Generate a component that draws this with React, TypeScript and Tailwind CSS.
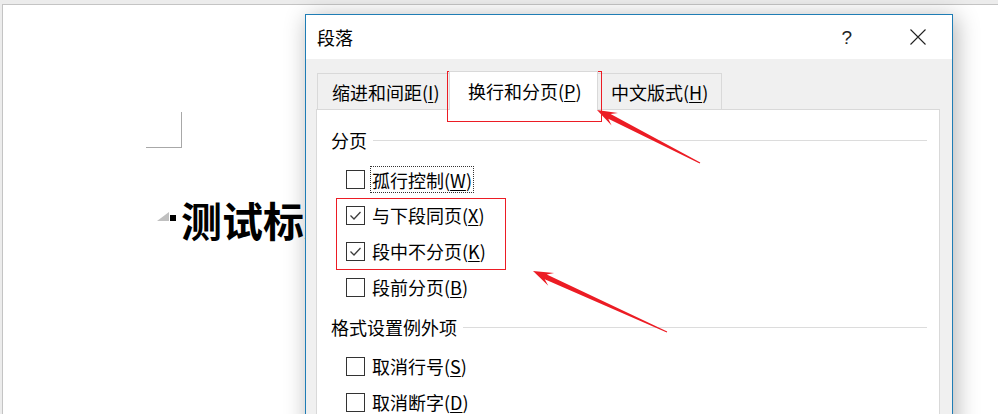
const cjk = "font-['Noto_Sans_CJK_SC',sans-serif]";

type Pt = [number, number];

// red annotation arrow: thin tail widening to a barbed head
const arrowPoints = (tail: Pt, tip: Pt) => {
  const dx = tip[0] - tail[0];
  const dy = tip[1] - tail[1];
  const len = Math.hypot(dx, dy);
  const ux = dx / len;
  const uy = dy / len;
  const nx = -uy;
  const ny = ux;
  const at = (back: number, side: number): string =>
    `${(tip[0] - ux * back + nx * side).toFixed(1)},${(tip[1] - uy * back + ny * side).toFixed(1)}`;
  const t1 = `${(tail[0] + nx * 0.6).toFixed(1)},${(tail[1] + ny * 0.6).toFixed(1)}`;
  const t2 = `${(tail[0] - nx * 0.6).toFixed(1)},${(tail[1] - ny * 0.6).toFixed(1)}`;
  return [t1, at(14, 2.6), at(20, 7), tip.join(','), at(20, -7), at(14, -2.6), t2].join(' ');
};

const Checkbox = ({ checked }: { checked?: boolean }) => (
  <div className="flex h-[19px] w-[19px] shrink-0 items-center justify-center border border-[#333] bg-white">
    {checked && (
      <svg width="17" height="17" viewBox="0 0 17 17" fill="none">
        <path d="M3.5 8.5 L7 12 L13.5 5" stroke="#3c3c3c" strokeWidth="1.3" />
      </svg>
    )}
  </div>
);

interface RowProps {
  label: string;
  hotkey: string;
  checked?: boolean;
  focused?: boolean;
}

const Row = ({ label, hotkey, checked, focused }: RowProps) => (
  <div className="flex h-[36px] items-center pl-[29px]">
    <Checkbox checked={checked} />
    {focused ? (
      <span className="ml-[5px] border border-dotted border-[#333] px-[1px] pb-[3px] pt-[4px] text-[18px] leading-[18px] text-black">
        {label}(<span className="underline underline-offset-2">{hotkey}</span>)
      </span>
    ) : (
      <span className="ml-[7px] text-[18px] leading-[18px] text-black">
        {label}(<span className="underline underline-offset-2">{hotkey}</span>)
      </span>
    )}
  </div>
);

const Section = ({ title, className = '' }: { title: string; className?: string }) => (
  <div className={`flex h-[18px] items-center pl-[14px] pr-[12px] ${className}`}>
    <span className="text-[18px] leading-[18px] text-black">{title}</span>
    <div className="ml-[6px] h-px flex-1 bg-[#dcdcdc]" />
  </div>
);

export default function App() {
  return (
    <div className={`relative h-[414px] w-[998px] overflow-hidden bg-[#ececec] ${cjk}`}>
      {/* document page */}
      <div className="ml-[2px] mt-[4px] h-[410px] border-l border-t border-[#c4c4c4] bg-white">
        <div className="ml-[143px] mt-[107px] h-[36px] w-[36px] border-b border-r border-[#a8a8a8]" />
        <div className="mt-[51px] flex h-[40px] items-start pl-[154px]">
          <svg className="mt-[13px]" width="12" height="9" viewBox="0 0 12 9">
            <polygon points="0,9 12,0 12,9" fill="#c0c0c0" />
          </svg>
          <div className="ml-[1px] mt-[16px] h-[6px] w-[6px] bg-black" />
          <span className="ml-[5px] whitespace-nowrap text-[41px] font-bold leading-[41px] text-black">
            测试标题
          </span>
        </div>
      </div>

      {/* paragraph dialog */}
      <div className="absolute left-[305px] top-[14px] flex h-[420px] w-[648px] flex-col border border-[#1f7db5] bg-[#f0f0f0] shadow-[3px_3px_22px_rgba(0,0,0,0.3)]">
        <div className="flex h-[44px] items-center bg-white pl-[11px] pr-[26px]">
          <span className="text-[18px] leading-[18px] text-black">段落</span>
          <span className="ml-auto font-['Liberation_Sans',sans-serif] text-[19px] leading-[19px] text-[#222]">?</span>
          <svg className="ml-[58px]" width="16" height="16" viewBox="0 0 16 16">
            <path d="M0.5 0.5 L15.5 15.5 M15.5 0.5 L0.5 15.5" stroke="#222" strokeWidth="1.1" />
          </svg>
        </div>

        <div className="mt-[12px] flex items-end pl-[11px]">
          <div className="flex h-[36px] w-[135px] items-center whitespace-nowrap border-l border-r border-t border-[#d9d9d9] bg-[#f0f0f0] pl-[14px] pt-[1px] text-[18px] leading-[18px] text-black">
            缩进和间距(<span className="underline underline-offset-2">I</span>)
          </div>
          <div className="relative z-10 -mb-px -ml-[3px] flex h-[39px] w-[149px] items-center whitespace-nowrap border-l border-r border-t border-[#d9d9d9] bg-white pb-[1px] pl-[18px] text-[18px] leading-[18px] text-black">
            换行和分页(<span className="underline underline-offset-2">P</span>)
          </div>
          <div className="-ml-px flex h-[36px] w-[125px] items-center whitespace-nowrap border-l border-r border-t border-[#d9d9d9] bg-[#f0f0f0] pl-[13px] pt-[1px] text-[18px] leading-[18px] text-black">
            中文版式(<span className="underline underline-offset-2">H</span>)
          </div>
        </div>

        <div className="ml-[10px] mr-[12px] flex-1 border border-[#d9d9d9] bg-white pt-[21px]">
          <Section title="分页" />
          <div className="mt-[12px]">
            <Row label="孤行控制" hotkey="W" focused />
            <Row label="与下段同页" hotkey="X" checked />
            <Row label="段中不分页" hotkey="K" checked />
            <Row label="段前分页" hotkey="B" />
          </div>
          <Section title="格式设置例外项" className="mt-[13px]" />
          <div className="mt-[12px]">
            <Row label="取消行号" hotkey="S" />
            <Row label="取消断字" hotkey="D" />
          </div>
        </div>
      </div>

      {/* red annotations */}
      <div className="absolute left-[447px] top-[71px] h-[51px] w-[155px] border border-[#ec1c24]" />
      <div className="absolute left-[336px] top-[198px] h-[72px] w-[170px] border border-[#ec1c24]" />
      <svg className="pointer-events-none absolute left-0 top-0" width="998" height="414">
        <polygon points={arrowPoints([700, 163], [597, 110])} fill="#ec1c24" />
        <polygon points={arrowPoints([667, 332], [533, 271])} fill="#ec1c24" />
      </svg>
    </div>
  );
}
